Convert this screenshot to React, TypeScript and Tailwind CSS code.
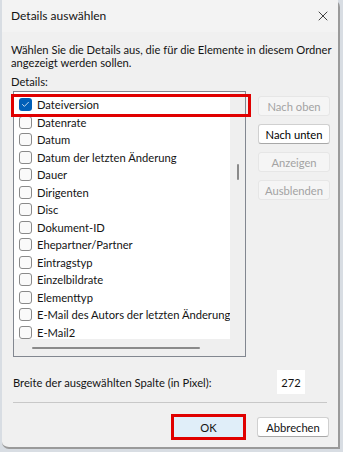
import { Check, X } from 'lucide-react';

const fields = [
  'Dateiversion',
  'Datenrate',
  'Datum',
  'Datum der letzten Änderung',
  'Dauer',
  'Dirigenten',
  'Disc',
  'Dokument-ID',
  'Ehepartner/Partner',
  'Eintragstyp',
  'Einzelbildrate',
  'Elementtyp',
  'E-Mail des Autors der letzten Änderung',
  'E-Mail2',
];

function SideButton({ label, enabled = false }: { label: string; enabled?: boolean }) {
  return (
    <div
      className={`flex h-[20px] w-[72px] items-center justify-center rounded-[3px] border ${
        enabled
          ? 'border-[#d0d0d0] border-b-[#a8a8a8] bg-white text-black'
          : 'border-[#e6e6e6] bg-[#f5f5f5] text-[#a3a3a3]'
      }`}
    >
      {label}
    </div>
  );
}

export default function App() {
  return (
    <div className="h-[452px] w-[343px] bg-[#d8dde3] text-[11.2px] leading-none text-[#141414]" style={{ fontFamily: 'Lato, sans-serif' }}>
      <div className="relative ml-[2px] flex h-[449px] w-[338px] flex-col rounded-tr-[7px] rounded-bl-[7px] border-r-[2px] border-b-[2px] border-[#9a9a9a] bg-[#f0f0f0]">
        {/* Title bar */}
        <div className="flex h-[32px] items-center justify-between bg-[#f3f3f3] pl-[9px] pr-[7px]">
          <span className="text-[12px]">Details auswählen</span>
          <X className="h-[16px] w-[16px]" strokeWidth={1.2} />
        </div>

        <div className="flex flex-col px-[9px] pt-[11px]">
          <p className="whitespace-nowrap leading-[13px]">
            Wählen Sie die Details aus, die für die Elemente in diesem Ordner
            <br />
            angezeigt werden sollen.
          </p>
          <p className="mt-[7px]">Details:</p>

          <div className="mt-[4px] flex gap-[12px]">
            {/* List */}
            <div className="relative ml-[2px] flex h-[266px] w-[233px] flex-col border border-[#828790] bg-white">
              <div className="flex flex-1 overflow-hidden">
                <div className="flex flex-1 flex-col pt-[4px]">
                  {fields.map((f, i) => (
                    <div key={f} className="flex h-[17.5px] shrink-0 items-center gap-[5px] pl-[5px]">
                      {i === 0 ? (
                        <span className="flex h-[13px] w-[13px] items-center justify-center rounded-[3px] bg-[#005fb8]">
                          <Check className="h-[9px] w-[9px] text-white" strokeWidth={2} />
                        </span>
                      ) : (
                        <span className="h-[13px] w-[13px] rounded-[3px] border border-[#8a8a8a] bg-[#fafafa]" />
                      )}
                      <span className="whitespace-nowrap">{f}</span>
                    </div>
                  ))}
                </div>
                <div className="flex w-[16px] flex-col items-center bg-[#efefef] pt-[72px]">
                  <div className="h-[16px] w-[2px] rounded bg-[#8a8a8a]" />
                </div>
              </div>
              <div className="flex h-[17px] items-center bg-[#efefef] pl-[18px]">
                <div className="h-[2px] w-[168px] rounded bg-[#8a8a8a]" />
              </div>
              {/* Highlight around first entry */}
              <div className="absolute left-[-3px] top-[2px] h-[23px] w-[240px] border-[3px] border-[#e00000]" />
            </div>

            {/* Side buttons */}
            <div className="flex flex-col gap-[8px] pt-[5px]">
              <SideButton label="Nach oben" />
              <SideButton label="Nach unten" enabled />
              <SideButton label="Anzeigen" />
              <SideButton label="Ausblenden" />
            </div>
          </div>

          <div className="mt-[13px] flex items-center justify-between pl-[2px] pr-[24px]">
            <span>Breite der ausgewählten Spalte (in Pixel):</span>
            <div className="flex h-[24px] w-[28px] items-center justify-center bg-white">272</div>
          </div>

          <div className="mx-[2px] mt-[8px] h-px bg-[#c8c8c8]" />

          <div className="mt-[11px] flex items-center justify-end gap-[11px]">
            <div className="flex h-[26px] w-[75px] items-center justify-center border-[3px] border-[#e00000] bg-[#e0eef9]">
              OK
            </div>
            <div className="flex h-[20px] w-[72px] items-center justify-center rounded-[3px] border border-[#d0d0d0] border-b-[#a8a8a8] bg-white">
              Abbrechen
            </div>
          </div>
        </div>
      </div>
    </div>
  );
}
